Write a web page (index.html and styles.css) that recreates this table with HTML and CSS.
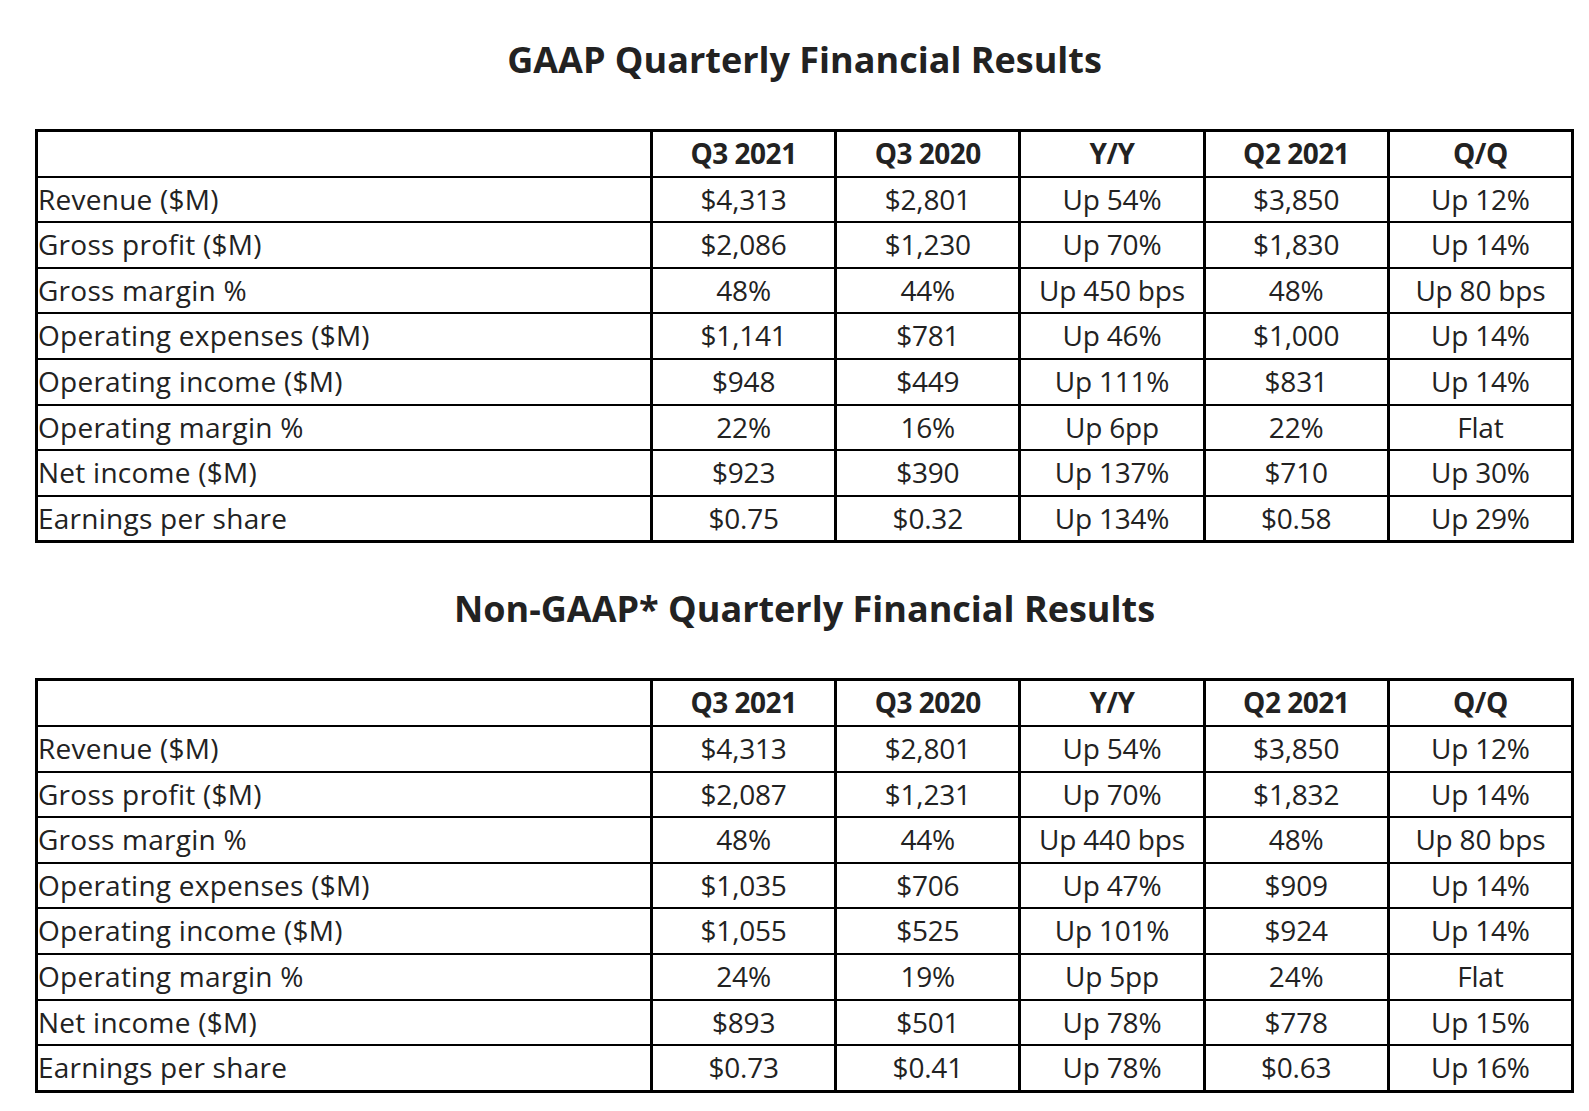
FILE: index.html
```html
<!DOCTYPE html>
<html lang="en">
<head>
<meta charset="utf-8">
<title>Quarterly Financial Results</title>
<link rel="stylesheet" href="styles.css">
</head>
<body>
<main class="page">
  <section class="block">
    <h2 class="title">GAAP Quarterly Financial Results</h2>
    <table class="fin">
      <colgroup><col class="c-label"><col><col><col><col><col></colgroup>
      <thead>
        <tr><th></th><th>Q3 2021</th><th>Q3 2020</th><th>Y/Y</th><th>Q2 2021</th><th>Q/Q</th></tr>
      </thead>
      <tbody>
        <tr><td>Revenue ($M)</td><td>$4,313</td><td>$2,801</td><td>Up 54%</td><td>$3,850</td><td>Up 12%</td></tr>
        <tr><td>Gross profit ($M)</td><td>$2,086</td><td>$1,230</td><td>Up 70%</td><td>$1,830</td><td>Up 14%</td></tr>
        <tr><td>Gross margin %</td><td>48%</td><td>44%</td><td>Up 450 bps</td><td>48%</td><td>Up 80 bps</td></tr>
        <tr><td>Operating expenses ($M)</td><td>$1,141</td><td>$781</td><td>Up 46%</td><td>$1,000</td><td>Up 14%</td></tr>
        <tr><td>Operating income ($M)</td><td>$948</td><td>$449</td><td>Up 111%</td><td>$831</td><td>Up 14%</td></tr>
        <tr><td>Operating margin %</td><td>22%</td><td>16%</td><td>Up 6pp</td><td>22%</td><td>Flat</td></tr>
        <tr><td>Net income ($M)</td><td>$923</td><td>$390</td><td>Up 137%</td><td>$710</td><td>Up 30%</td></tr>
        <tr><td>Earnings per share</td><td>$0.75</td><td>$0.32</td><td>Up 134%</td><td>$0.58</td><td>Up 29%</td></tr>
      </tbody>
    </table>
  </section>
  <section class="block">
    <h2 class="title">Non-GAAP* Quarterly Financial Results</h2>
    <table class="fin">
      <colgroup><col class="c-label"><col><col><col><col><col></colgroup>
      <thead>
        <tr><th></th><th>Q3 2021</th><th>Q3 2020</th><th>Y/Y</th><th>Q2 2021</th><th>Q/Q</th></tr>
      </thead>
      <tbody>
        <tr><td>Revenue ($M)</td><td>$4,313</td><td>$2,801</td><td>Up 54%</td><td>$3,850</td><td>Up 12%</td></tr>
        <tr><td>Gross profit ($M)</td><td>$2,087</td><td>$1,231</td><td>Up 70%</td><td>$1,832</td><td>Up 14%</td></tr>
        <tr><td>Gross margin %</td><td>48%</td><td>44%</td><td>Up 440 bps</td><td>48%</td><td>Up 80 bps</td></tr>
        <tr><td>Operating expenses ($M)</td><td>$1,035</td><td>$706</td><td>Up 47%</td><td>$909</td><td>Up 14%</td></tr>
        <tr><td>Operating income ($M)</td><td>$1,055</td><td>$525</td><td>Up 101%</td><td>$924</td><td>Up 14%</td></tr>
        <tr><td>Operating margin %</td><td>24%</td><td>19%</td><td>Up 5pp</td><td>24%</td><td>Flat</td></tr>
        <tr><td>Net income ($M)</td><td>$893</td><td>$501</td><td>Up 78%</td><td>$778</td><td>Up 15%</td></tr>
        <tr><td>Earnings per share</td><td>$0.73</td><td>$0.41</td><td>Up 78%</td><td>$0.63</td><td>Up 16%</td></tr>
      </tbody>
    </table>
  </section>
</main>
</body>
</html>
```

FILE: styles.css
```css
html, body {
  margin: 0;
  padding: 0;
  background: #ffffff;
}

body {
  font-family: "Open Sans", "Noto Sans", sans-serif;
  color: #222222;
}

.page {
  width: 1539px;
  margin-left: 35px;
  padding-top: 40px;
  display: flex;
  flex-direction: column;
  gap: 46px;
}

.block {
  display: flex;
  flex-direction: column;
}

.title {
  margin: 0 0 49px;
  font-size: 36px;
  line-height: 40px;
  font-weight: 700;
  text-align: center;
  color: #222222;
}

.fin {
  width: 1539px;
  table-layout: fixed;
  border-collapse: separate;
  border-spacing: 0;
  border: 3px solid #000000;
  font-size: 28px;
}

.c-label { width: 612px; }

.fin th,
.fin td {
  padding: 0;
  border-left: 3px solid #000000;
  border-top: 2px solid #000000;
  text-align: center;
  vertical-align: middle;
  white-space: nowrap;
  line-height: 43.6px;
  letter-spacing: -0.2px;
}

.fin thead th {
  border-top: 0;
  font-weight: 700;
  letter-spacing: -0.5px;
}

.fin th:first-child,
.fin td:first-child {
  border-left: 0;
}

.fin td:first-child {
  text-align: left;
  letter-spacing: 0.25px;
}
```
